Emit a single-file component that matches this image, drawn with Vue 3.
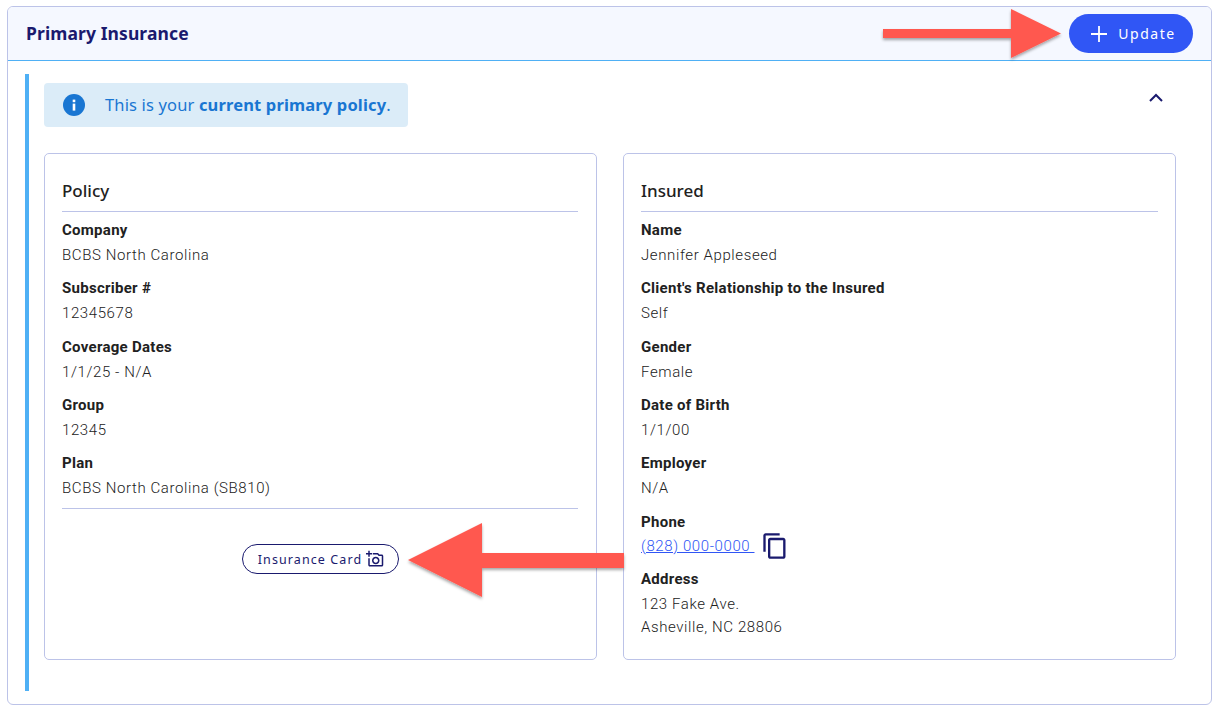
<script setup>
const policy = [
  { label: 'Company', value: 'BCBS North Carolina' },
  { label: 'Subscriber #', value: '12345678' },
  { label: 'Coverage Dates', value: '1/1/25 - N/A' },
  { label: 'Group', value: '12345' },
  { label: 'Plan', value: 'BCBS North Carolina (SB810)' },
]
const insured = [
  { label: 'Name', value: 'Jennifer Appleseed' },
  { label: "Client's Relationship to the Insured", value: 'Self' },
  { label: 'Gender', value: 'Female' },
  { label: 'Date of Birth', value: '1/1/00' },
  { label: 'Employer', value: 'N/A' },
]
</script>

<template>
  <div class="page">
    <section class="panel">
      <header class="panel-head">
        <h1>Primary Insurance</h1>
        <button class="update">
          <svg width="18" height="18" viewBox="0 0 18 18"><path d="M9 1v16M1 9h16" stroke="#fff" stroke-width="1.8" fill="none"/></svg>
          <span>Update</span>
        </button>
      </header>
      <div class="panel-body">
        <div class="policy">
          <div class="top-row">
            <div class="alert">
              <svg width="22" height="22" viewBox="0 0 22 22"><circle cx="11" cy="11" r="11" fill="#1976d2"/><rect x="9.7" y="9.6" width="2.6" height="7" fill="#fff"/><rect x="9.7" y="5.6" width="2.6" height="2.6" fill="#fff"/></svg>
              <span class="alert-text">This is your <b>current primary policy</b>.</span>
            </div>
            <svg class="chev" width="14" height="9" viewBox="0 0 14 9"><path d="M1 8l6-6 6 6" stroke="#1a1a6e" stroke-width="2" fill="none"/></svg>
          </div>
          <div class="cards">
            <article class="card">
              <h2>Policy</h2>
              <dl>
                <div v-for="f in policy" :key="f.label" class="field">
                  <dt>{{ f.label }}</dt>
                  <dd>{{ f.value }}</dd>
                </div>
              </dl>
              <div class="card-foot">
                <button class="card-btn">
                  <span>Insurance Card</span>
                  <svg width="18" height="18" viewBox="0 0 24 24" fill="#1a1a6e"><path d="M21 6h-3.170L16 4H9v2h6.120l1.830 2H21v12H5v-9H3v9c0 1.100.9 2 2 2h16c1.100 0 2-.9 2-2V8c0-1.100-.9-2-2-2zM8 14c0 2.760 2.240 5 5 5s5-2.240 5-5-2.240-5-5-5-5 2.240-5 5zm5-3c1.650 0 3 1.350 3 3s-1.350 3-3 3-3-1.350-3-3 1.350-3 3-3zM5 6h3V4H5V1H3v3H0v2h3v3h2z"/></svg>
                </button>
              </div>
            </article>
            <article class="card insured">
              <h2>Insured</h2>
              <dl>
                <div v-for="f in insured" :key="f.label" class="field">
                  <dt>{{ f.label }}</dt>
                  <dd>{{ f.value }}</dd>
                </div>
                <div class="field phone-field">
                  <dt>Phone</dt>
                  <dd class="phone">
                    <a href="#">(828) 000-0000&nbsp;</a>
                    <svg width="28" height="28" viewBox="0 0 24 24" fill="#1a1a6e"><path d="M16 1H4c-1.100 0-2 .9-2 2v14h2V3h12V1zm3 4H8c-1.100 0-2 .9-2 2v14c0 1.100.9 2 2 2h11c1.100 0 2-.9 2-2V7c0-1.100-.9-2-2-2zm0 16H8V7h11v14z"/></svg>
                  </dd>
                </div>
                <div class="field">
                  <dt>Address</dt>
                  <dd>123 Fake Ave.</dd>
                  <dd class="addr-line">Asheville, NC 28806</dd>
                </div>
              </dl>
            </article>
          </div>
        </div>
      </div>
    </section>

    <svg class="arrows" width="1218" height="712" viewBox="0 0 1218 712">
      <defs>
        <filter id="ashadow" x="-10%" y="-20%" width="120%" height="150%">
          <feDropShadow dx="0" dy="2" stdDeviation="1.500" flood-color="#000" flood-opacity="0.35"/>
        </filter>
      </defs>
      <path filter="url(#ashadow)" fill="#ff584f" d="M883 29H1011V9L1061 33.500 1011 58V38H883z"/>
      <path filter="url(#ashadow)" fill="#ff584f" d="M624 553H482V523L408 560 482 597V568H624z"/>
    </svg>
  </div>
</template>

<style>
html, body { margin: 0; background: #fff; }
</style>

<style scoped>
.page {
  position: relative;
  width: 1218px;
  height: 712px;
  box-sizing: border-box;
  padding: 6px 6px 7px 7px;
  font-family: Roboto, sans-serif;
  overflow: hidden;
}
.panel {
  height: 699px;
  box-sizing: border-box;
  border: 1px solid #bcc3e8;
  border-radius: 6px;
  overflow: hidden;
}
.panel-head {
  height: 54px;
  box-sizing: border-box;
  background: #f5f8ff;
  border-bottom: 1px solid #4fb0f5;
  display: flex;
  align-items: center;
  justify-content: space-between;
  padding: 0 18px 0 18px;
}
h1 {
  margin: 0;
  padding-bottom: 2px;
  font: 700 17.500px "Noto Sans", sans-serif;
  color: #1a1a6e;
  letter-spacing: 0.1px;
}
.update {
  width: 124px;
  height: 39px;
  border: 0;
  border-radius: 20px;
  background: #3056f5;
  color: #fff;
  display: flex;
  align-items: center;
  justify-content: center;
  gap: 10px;
  font: 400 14px "Noto Sans", sans-serif;
  letter-spacing: 1.500px;
  padding: 0 0 0 4px;
}
.panel-body { padding: 13px 35px 0 17px; }
.policy {
  border-left: 4px solid #4fb0f5;
  height: 617px;
  box-sizing: border-box;
  padding: 9px 0 0 15px;
}
.top-row {
  display: flex;
  justify-content: space-between;
  align-items: flex-start;
  padding-right: 13px;
}
.alert {
  width: 364px;
  height: 44px;
  box-sizing: border-box;
  background: #dbecf8;
  border-radius: 4px;
  display: flex;
  align-items: center;
  gap: 20px;
  padding-left: 19px;
  font: 400 16.500px "Noto Sans", sans-serif;
  letter-spacing: 0.15px;
  color: #1976d2;
  white-space: nowrap;
}
.alert-text { padding-bottom: 2px; }
.chev { margin: 10px 0 0; }
.cards {
  display: flex;
  gap: 26px;
  margin-top: 26px;
}
.card {
  width: 553px;
  height: 507px;
  box-sizing: border-box;
  border: 1px solid #bcc3e8;
  border-radius: 5px;
  padding: 25px 18px 0 17px;
  color: #212121;
}
.insured { padding-right: 17px; }
h2 {
  margin: 0;
  height: 32px;
  border-bottom: 1px solid #bcc3e8;
  font: 500 17px/24px "Noto Sans", sans-serif;
  color: #212121;
}
dl { margin: 0; padding-top: 6px; }
.field { margin-bottom: 8.300px; }
.phone-field { padding-top: 1px; margin-bottom: 10px; }
dt {
  font: 700 15px/25px Roboto, sans-serif;
  letter-spacing: 0.28px;
  color: #212121;
}
dd {
  margin: 0;
  font: 300 15px/25px Roboto, sans-serif;
  letter-spacing: 0.6px;
  color: #212121;
}
.addr-line { line-height: 21px; }
.phone {
  display: flex;
  align-items: center;
  gap: 6px;
  height: 22px;
}
.phone a { color: #3056f5; }
.card-foot {
  border-top: 1px solid #bcc3e8;
  display: flex;
  justify-content: center;
  margin-top: -1px;
  padding-top: 35px;
}
.card-btn {
  width: 157px;
  height: 30px;
  box-sizing: border-box;
  background: #fff;
  border: 1px solid #1a1a6e;
  border-radius: 15px;
  color: #1a1a6e;
  display: flex;
  align-items: center;
  justify-content: center;
  gap: 4px;
  font: 400 12.500px "Noto Sans", sans-serif;
  letter-spacing: 1.100px;
  padding: 0 0 0 2px;
}
.arrows {
  position: absolute;
  left: 0;
  top: 0;
  pointer-events: none;
}
</style>
